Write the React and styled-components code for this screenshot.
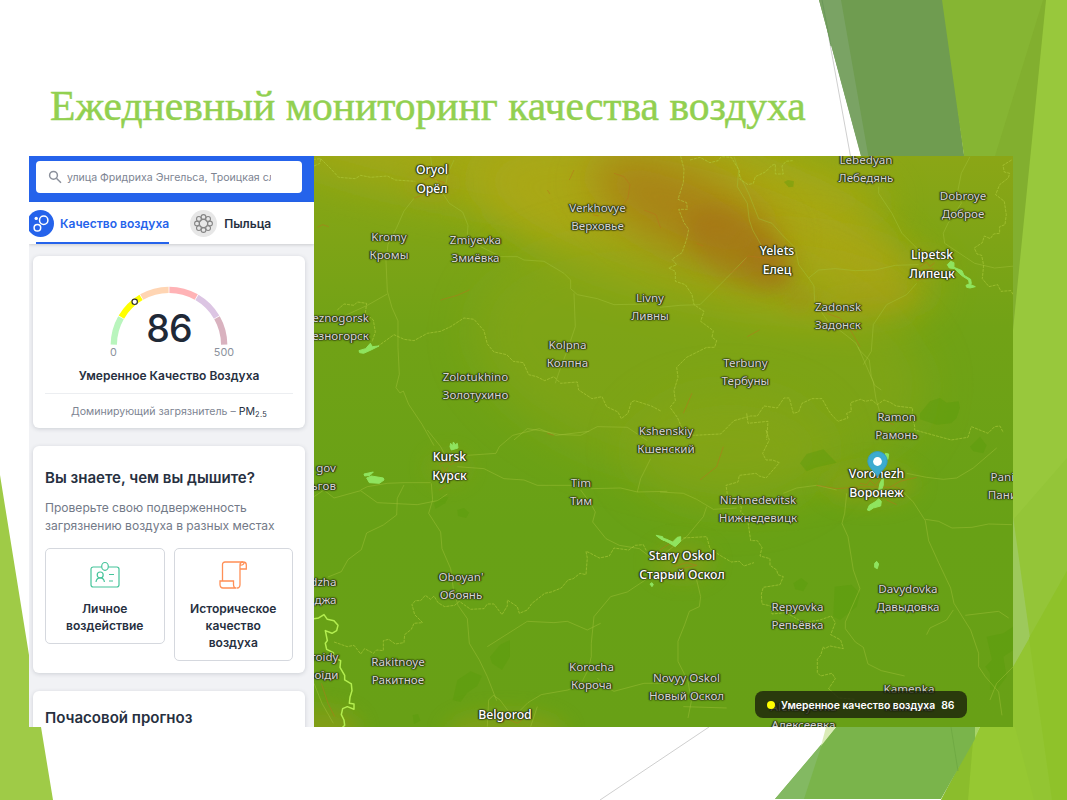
import React from "react";
import styled, { createGlobalStyle, css } from "styled-components";

const GlobalStyle = createGlobalStyle`
  *, *::before, *::after { box-sizing: border-box; }
  body { margin: 0; background: #fff; overflow: hidden; }
`;

/* ---------- slide ---------- */

const Slide = styled.main`
  position: relative;
  width: 1067px;
  height: 800px;
  overflow: hidden;
  background: #fff;
`;

const Facets = styled.svg`
  position: absolute;
  inset: 0;
`;

const SlideBody = styled.div`
  position: relative;
  display: flex;
  flex-direction: column;
  padding: 81px 54px 0 29px;
`;

const Title = styled.h1`
  margin: 0;
  padding-left: 21px;
  height: 75px;
  font: 400 41.55px/51px "Liberation Serif", serif;
  color: #92d050;
  -webkit-text-stroke: 0.5px #92d050;
  white-space: nowrap;
`;

const Screen = styled.section`
  display: flex;
  height: 571px;
  overflow: hidden;
  font-family: Inter, sans-serif;
`;

/* ---------- sidebar ---------- */

const Sidebar = styled.aside`
  display: flex;
  flex-direction: column;
  width: 285px;
  height: 571px;
  overflow: hidden;
  background: #f1f2f5;
  color: #27303f;
`;

const SearchBar = styled.div`
  flex: none;
  height: 46px;
  padding: 5px 12px 9px 7px;
  background: #2563eb;
`;

const SearchField = styled.div`
  display: flex;
  align-items: center;
  height: 32px;
  padding: 0 31px 0 12px;
  gap: 5px;
  border-radius: 4px;
  background: #fff;
  color: #7d8492;
  font-size: 10.6px;
`;

const SearchText = styled.span`
  flex: 1;
  overflow: hidden;
  white-space: nowrap;
`;

const Tabs = styled.nav`
  position: relative;
  flex: none;
  display: flex;
  height: 42px;
  gap: 21px;
  padding-left: 7px;
  background: #fff;
  box-shadow: 0 1px 3px rgba(0, 0, 0, 0.16);
`;

const Tab = styled.div`
  display: flex;
  align-items: center;
  gap: ${(p) => (p.$active ? 6 : 7)}px;
  font-size: 12.05px;
  font-weight: 600;
  white-space: nowrap;
  color: ${(p) => (p.$active ? "#2563eb" : "#27303f")};
  ${(p) => p.$active && css`box-shadow: inset 0 -2px #2563eb;`}
  svg { flex: none; margin-left: ${(p) => (p.$active ? "-9px" : "0")}; }
`;

const CardList = styled.div`
  display: flex;
  flex-direction: column;
  gap: 18px;
  padding: 12px 9px 0 4px;
`;

const Card = styled.article`
  flex: none;
  height: ${(p) => p.$height}px;
  padding: ${(p) => p.$padTop}px 12px 0;
  border-radius: 6px;
  background: #fff;
  box-shadow: 0 1px 4px rgba(30, 40, 60, 0.17);
`;

const Gauge = styled.div`
  position: relative;
  display: flex;
  justify-content: center;
  height: 80px;
`;

const GaugeValue = styled.div`
  position: absolute;
  top: 23px;
  left: 0;
  right: 0;
  text-align: center;
  font-size: 37.5px;
  line-height: 46px;
  font-weight: 500;
  letter-spacing: -0.8px;
  color: #1f2937;
`;

const GaugeScale = styled.div`
  position: absolute;
  top: 63px;
  left: 65px;
  width: 124px;
  display: flex;
  justify-content: space-between;
  font-size: 10.8px;
  line-height: 14px;
  color: #8b919c;
`;

const Status = styled.div`
  height: 31px;
  padding-top: 5px;
  line-height: 16px;
  border-bottom: 1px solid #eceef1;
  text-align: center;
  font-size: 12px;
  font-weight: 600;
  white-space: nowrap;
`;

const Pollutant = styled.div`
  padding-top: 10px;
  text-align: center;
  font-size: 10.6px;
  line-height: 16px;
  white-space: nowrap;
  color: #7d8492;
  b { font-weight: 400; color: #27303f; }
  small { font-size: 7.4px; position: relative; top: 2px; letter-spacing: 0.3px; }
`;

const Heading = styled.h2`
  margin: 0;
  font-size: 15.05px;
  line-height: 20px;
  font-weight: 600;
  white-space: nowrap;
`;

const Lead = styled.p`
  margin: 11px 0 13px;
  font-size: 12.05px;
  line-height: 18px;
  color: #737a88;
  white-space: nowrap;
`;

const Options = styled.div`
  display: flex;
  align-items: flex-start;
  gap: 9px;
`;

const Option = styled.div`
  display: flex;
  flex-direction: column;
  align-items: center;
  width: 120px;
  height: ${(p) => p.$height}px;
  padding-top: 12px;
  border: 1px solid #d5d8de;
  border-radius: 5px;
  text-align: center;
  font-size: 12.05px;
  line-height: 16.9px;
  font-weight: 600;
  svg { height: 28px; margin-bottom: 12px; }
`;

/* ---------- map ---------- */

const MapPane = styled.div`
  position: relative;
  width: 699px;
  height: 571px;
  overflow: hidden;
`;

const MapCanvas = styled.svg`
  display: block;
`;

const Label = styled.div`
  position: absolute;
  left: ${(p) => p.$x - 314}px;
  top: ${(p) => p.$y - 156 - (p.$city ? 10 : 9)}px;
  transform: translateX(${(p) => (p.$end ? "-100%" : "-50%")});
  text-align: ${(p) => (p.$end ? "right" : "center")};
  white-space: nowrap;
  font-family: "Noto Sans", "Open Sans", sans-serif;
  font-size: ${(p) => (p.$city ? 12.25 : 11.6)}px;
  line-height: ${(p) => (p.$city ? 19.3 : 18.2)}px;
  font-weight: ${(p) => (p.$city ? 500 : 400)};
  color: ${(p) => (p.$city ? "#fff" : "#d6d6d2")};
  text-shadow: 0 0 1px #2c3518, 0 0 1px #2c3518, 0 0 2px #2c3518, 0 0 2px #2c3518,
    1px 0 1px #2c3518, -1px 0 1px #2c3518;
`;

const Pin = styled.svg`
  position: absolute;
  left: 552px;
  top: 294px;
`;

const Toast = styled.div`
  position: absolute;
  left: 441px;
  top: 535px;
  display: flex;
  align-items: center;
  width: 212px;
  height: 27px;
  padding: 1px 0 0 12px;
  border-radius: 8px;
  background: rgba(24, 30, 10, 0.78);
  color: #fff;
  font-size: 10.4px;
  font-weight: 600;
  white-space: nowrap;
`;

const Dot = styled.span`
  width: 8px;
  height: 8px;
  margin-right: 6px;
  border-radius: 50%;
  background: #ff0;
`;

const ToastValue = styled.span`
  margin-left: 6px;
`;

const LABELS = [
  [432, 169.5, "Oryol", "Орёл", 1],
  [389, 236.5, "Kromy", "Кромы"],
  [475.5, 240, "Zmiyevka", "Змиёвка"],
  [597.5, 207.5, "Verkhovye", "Верховье"],
  [650, 298, "Livny", "Ливны"],
  [567.5, 345, "Kolpna", "Колпна"],
  [475.5, 377, "Zolotukhino", "Золотухино"],
  [369, 318, "eznogorsk", "езногорск", 0, 1],
  [866, 160, "Lebedyan", "Лебедянь"],
  [963, 195.5, "Dobroye", "Доброе"],
  [777, 251, "Yelets", "Елец", 1],
  [932, 255, "Lipetsk", "Липецк", 1],
  [838, 306.5, "Zadonsk", "Задонск"],
  [745.5, 362.5, "Terbuny", "Тербуны"],
  [666, 431, "Kshenskiy", "Кшенский"],
  [896.5, 417, "Ramon", "Рамонь"],
  [449.5, 457, "Kursk", "Курск", 1],
  [336, 467.5, "gov", "ьгов", 0, 1],
  [581, 483, "Tim", "Тим"],
  [876.5, 473.5, "Voronezh", "Воронеж", 1],
  [1009.5, 477, "Panino", "Панино"],
  [758, 500, "Nizhnedevitsk", "Нижнедевицк"],
  [682, 556, "Stary Oskol", "Старый Оскол", 1],
  [461, 577, "Oboyan'", "Обоянь"],
  [336.5, 582, "dzha", "джа", 0, 1],
  [908, 589, "Davydovka", "Давыдовка"],
  [797.5, 606.5, "Repyovka", "Репьёвка"],
  [338.5, 656.5, "roidy", "роїди", 0, 1],
  [398, 662, "Rakitnoye", "Ракитное"],
  [591.5, 667, "Korocha", "Короча"],
  [686.5, 677.5, "Novyy Oskol", "Новый Оскол"],
  [909, 689, "Kamenka", "Каменка"],
  [505, 714.5, "Belgorod", "Белгород", 1],
  [803.5, 707, "Alekseyevka", "Алексеевка"],
];

/* [cx, cy, rx, ry, colour, opacity, rotation] */
const HEAT = [
  [560, 160, 330, 60, "#a8a914", 0.75, 8],
  [690, 225, 220, 72, "#aaa815", 0.95, 14],
  [820, 275, 115, 42, "#a9a614", 0.75, 8],
  [700, 360, 230, 120, "#8ba616", 0.5, 10],
  [730, 450, 100, 60, "#89a617", 0.5, 0],
  [685, 210, 100, 40, "#a97a16", 0.8, 25],
  [740, 250, 60, 32, "#a46517", 0.35, 34],
  [768, 264, 26, 18, "#a65c18", 0.3, 40],
  [800, 299, 16, 9, "#a67a17", 0.45, 0],
  [865, 300, 50, 12, "#a89a13", 0.35, -5],
  [925, 262, 24, 14, "#9aa015", 0.35, 0],
  [870, 484, 48, 20, "#90a015", 0.55, 0],
  [683, 562, 30, 18, "#8f9f14", 0.5, 0],
  [506, 732, 60, 20, "#8ea015", 0.6, 0],
  [320, 730, 40, 22, "#929c16", 0.6, 0],
  [448, 468, 22, 16, "#879f15", 0.4, 0],
  [432, 184, 26, 12, "#a89512", 0.4, 0],
];

/* Each map tile is drawn at three times the screen scale. */
const TILES = [
  {
    at: [314, 150],
    borders: [
      "M0 48l18-8 2-14-20 2M20 26l30 30 24 26 50 4 16-10 30 6 50 -4 24 12 60 4M190 590l50-36 30 14 30 4 40-22 40-6 30-14 40-26 30 4 30 34 10 40 20 24 38 8 20 20 30 4 16 36 24 6 24 12 28-12 20 20 50-4 4 24 40 26 30-6 14 30 34 16 10 20 20-16 10-34 10-4 50 16 30 16",
      "M70 480l20-18 30 4 10-10 28 4-4 30 24 20 6 36-10 30",
    ],
    roads: [
      "M300 145l-30 38-22 50-26 50-6 50 4 90 14 50 18 40 0 80 4 80-10 40 12 16 10-6 16 40 40 60 36 64",
      "M350 20l6 50 30 60 20 30 40 26 16 40-2 30",
      "M500 290l60 30 50 0 20 10 60 4 60 36 20 20 0 26 20 18 60 12 50 18 100-2",
      "M60 512l100-46 60-34M600 870l40-34 40 6 60 12 60 2 50-26 90 2 60 40",
      "M420 30l-18 40 -6 30M780 430l4 100-20 60-30 80-10 30",
    ],
    hot: ["M900 70l30 10 18 24-6 40-14 20M990 180l36 14 14 40M780 60l-14 30M700 120l8 12M330 90l20-8 22 10 20 6-30 16M10 232l16-8 18 6M380 450l50-14 36-16M836 194l20 4M300 145l40-16"],
    lakes: ["M135 602l20-6 14-16 6 10 20-2-24 12-22 10-12-2z"],
    woods: [],
  },
  {
    at: [660, 150],
    borders: [
      "M62 18l10 40-2 40-16 50 26 10 2 20-26 0 16 40 14 20-6 30-14 40-30 20 14 16-24 10 20 10 0 30 30 10 20 30 6 30 30 20-10 30 38 28-4 20 14 10-6 20-24 0-60 30-30 30 4 30-12 40 4 30-16 20 22 30 20 46 30 8 80-4 40-40 50-14 20 0 20-30 40 6 20-30 16 0 12 46 16-4 10-26 30-14 30 0 20 36 10 14 18 18 30-10-4-14 14-6-2-26 30-10 14 6 20-4 16 14 20-14 20 8 16 10 50 6-2 24 8 30 0 12 110 30 50-8 10-32 50 20 20-20 16-2 10 20",
      "M90 30l30-8 30 16 24-6 10-12 30 2 24 40 2 26 24 16 16-4 6-20 30-14 20-20 10-4 0 30 24 0-4-24 12-14 20-2",
      "M1055 30l-26 16 4 20 16 4-4 14-26 20-12 30 26 20 6 40-4 30-16 6 0 20-18 2-10 14-18-8-6 20-24 16 8 18 14 4 6 30-4 40 20 24 26-6 10 20 30-2 16 30",
      "M260 790l4 30 60-6-4 56",
    ],
    roads: [
      "M222 20l14 40-4 50 30 50 6 50 10 30 26 46M236 70l30 60 30 76 40 14 30 34 40 40 10 50 30 40 16 24 2 50 40 56 60 46 24 20 10 20 30 30 6 50 10 26 20 14",
      "M0 472l60-6 60-2 40-40 40-40 60-62M446 384l30-24 50-4 60 6 60-2 60-14 70-2",
      "M656 110l0 20 40 60 30 60 50 50M930 20l-26 50-10 50 10 40-40 60-14 30 4 30 30 20 60 40 60 14 60-6",
      "M740 434l-60 30-40 60-6 80-24 40M770 400l-30 34M594 590l20 46 26 60 8 50 14 50",
    ],
    hot: ["M210 370l30-20 24-32 66 8M110 280l20 8M262 560l36-20M780 350l20-14 10 14 14-12M790 360l30-4M770 390l30-4 M500 490l40 14 30 30 20 10M560 520l40 70M70 790l26-60M690 820l12 4"],
    lakes: ["M862 344l10-10 10 4 0 14 24 10 6 14 20 12 2 12-2 4 14 6-16 4-10-2-2-6 10-4-2-12-22-14-20-20-16-2z"],
    woods: ["M372 96l12-6 18 4-2 16-14 2z", "M780 790l30-36 30-10 20 14 36-4 4 20-10 30-16 16-44 4-50-16z"],
  },
  {
    at: [314, 430],
    borders: [
      "M60 636l40 14 20-4 20 26 12-16 26 14 10-10 20 2 0-30 16-4 20 14 26-4 2-24 20-16 8-18 26-2-24-24-8-30 10-12 16 0 14-16 16 12 10-10 12 20 20 12 30-4 14-12 14 10 20 14 40-2 10-14 20 0 24 32 16-26 0-18 30 20 6 20 24-10 14-20 26-20 12-10 20-4 30-12 20-24 16-4 20-16 18 4 4-50-4-20 10 4 30 16 30-6 14-24 44 6 20-14 24-2 10 20",
    ],
    roads: [
      "M340 0l40 50 16 30M460 76l86-6 10-20 40-34 80-20 50 20 100-12M430 110l80 6 60 30 60 4 40 16 130 0M830 176l90-2 50 12 90-2M970 186l10-40 30-60",
      "M0 200l30-20 30 24 80-22 50 36 120 6 60-12 30-20M140 180l20-10 60-10 50-2 80 0M270 165l-20 40-2 50-40 30-50 24-16 50-40 30-20 36-40 16",
      "M352 160l4 50-12 40 36 56 4 50 26 60 8 60 14 50 28 40 6 74 30 50 24 50 18 46 10 26",
      "M800 180l30 40 14 26-8 30 40 50 40 20 60 10 40 30M1000 446l-60 40-50 14-50 60-8 80 0 40-10 40-20 40-40 20-80 14-40 24-30 30M1050 760l-60 0-90 24-20-10-30-30M520 650l120-76 80 4 40-4 60 26 40-20",
      "M520 890l4-80 14-14 20 14 30 40M650 890l20-60M0 760l24 60 34 60",
    ],
    hot: ["M376 104l20-10 14 10 20-10 10 4M384 110l8 18 10-16M376 180l20-14M560 880l20-14 30 14 14-10M700 10l20 6M430 460l12 6M22 760l20 60 20 40"],
    lakes: ["M410 40l6 8 2-12 6 8 6-4 2 14-20 6-4-10zM150 132l28-6-10 10-16 2zM158 144l14-6 36 6 2 6-14 10-30-2zM1026 316l20 4 4 12-14-8zM1008 462l6-4 4 6-4 6z"],
    woods: ["M430 240l20-6 16 14-10 16-24-6zM360 220l20-20 24 0-10 20-30 16zM528 680l30-36 30-14 0 50-24 40-30-20zM416 810l14-60 40-26 34 14-14 30-30 20-20 28zM296 856l16-4 8 20-20 10z"],
    outline: "M0 566l14-2 16-10 10 14 20 4 12 14-4 16-14 8-20-8 6 30-6 8 4 18 20 10 4 16 18 8-2 20 14 24 0 14 20 12 2 20-6 20-2 18 14 2 0 16-20-8-14 6-4 18 8 16 2 16-10 10",
  },
  {
    at: [660, 430],
    borders: [
      "M318 0l10 30-20 40 10 20 20 0 20 8-40 46-20-6-10-8-50 6-4 20-36 10 6 40 30 6 10 20-2 14 20 16 10 70 20 0 14 20-6 26 30 8 0 20 20 14 4 14 16 6-10 24-50 8-6 20 2 30 26 6 4 24 40-4 20 10 34 20 50-8 34-12 12 20-14 36 30 16 8 26-40-8-16 8-4-6-8 26-10 12 0 40 10 10 34-8 10 16-20 30 30 28 50 4",
      "M70 324l70-4 10 36 30 20 34 20 24-2 14 14 30-10",
    ],
    roads: [
      "M0 186l70 4 40 18 50 30 70-4M140 230l-10 30-50 60-40 30-40 30M110 450l12 50-4 30-30 14-14 40-20 50 0 60 30 60 10 60-10 50M70 830l130 4",
      "M370 190l40-16 60-8 60 14M720 176l40 40 36 56 10 60 30 66 36 76 10 46 50 80 24 70 0 40 20 30 40 46 10 70M560 190l-6 60-8 30 18 40 16 100 20 56-44 100 0 20 30 40 24 16 14 50 40 20 70 16",
      "M740 130l60 12 50 6 40-4 50-30 70-60M796 268l40 6 40 20 60-2 50-10 70 2M880 540l-20 30-50 24-10 20M916 556l100-12 30 20M1060 710l-50 50-20 50",
    ],
    hot: ["M470 166l60 10 80-6 80 2 30-18 50-12M600 160l20 4 10-14 16 16 14-16M640 180l14 20 14-4M660 190l20 20 30 14M120 150l50-40 20-60M0 360l60-40M40 410l40-12 30 8-44 10M700 170l20 6"],
    lakes: ["M676 70l10 2-2 16-6-4zM656 180l4-20 10-20 0 26-8 20zM622 240l6-14 20-12 8-8 8 8-2 14-22 6-12 8zM0 322l20 6 18 8 14-14 10-2 0 14-16 16-10-6-10-6-24-12zM644 400l6-6 6 8-4 14-8-4z"],
    woods: ["M420 100l20-28 50-14 40 40-60 14-30 12zM520 560l4-90 50-6 26 26-10 40-50 40zM400 460l24-16 20 16-14 24-24-6zM980 620l50-10 30-20 0 70-30 20 10 60-30 40-20 0 0-50-14-20 20-20z", "M930 50l30-30 20 26-10 24-30-6z"],
  },
];

const ZONES = ["#b9f5bd", "#ffff00", "#ffd5b3", "#ffb3b6", "#dcc5e3", "#d9b2bf"];

function arc(from, to) {
  const pt = (deg) => {
    const a = (Math.PI * (180 - deg)) / 180;
    return `${(60 + 55.2 * Math.cos(a)).toFixed(2)} ${(59 - 55.2 * Math.sin(a)).toFixed(2)}`;
  };
  return `M${pt(from)}A55.2 55.2 0 0 1 ${pt(to)}`;
}

function SlideFacets() {
  return (
    <Facets width="1067" height="800" viewBox="0 0 1067 800" aria-hidden="true">
      <path d="M822 0l31 170M709 727L600 800" stroke="#cfcfcf" fill="none" />
      <path fill="#6f9c50" d="M819 0H944L966 170H865z" />
      <path fill="#7aa364" d="M819 0H841L869 160H862z" />
      <path stroke="#6b985a" d="M822 0l9 46" />
      <path fill="#86b533" d="M942 0H1067V500H1010L964 156z" />
      <path fill="#82af2f" d="M1043 0h6L1013 400V156H995z" />
      <path fill="#98c83c" d="M1046 0H1067V800H1013V330z" />
      <path fill="#94c538" d="M1067 458L1013 520V800H1067z" />
      <path fill="#9dc95c" d="M1013 516L1030 638 1013 668z" />
      <path fill="#93c532" d="M1067 571L1013 667V727H980L941 800H1067z" />
      <path fill="#8fc22a" d="M1067 571L1029 638 1052 800H1067z" />
      <path fill="#96c832" d="M980 727h35L1034 800H968l5-60z" />
      <path fill="#8bbd2c" d="M973 740L968 800H941z" />
      <path fill="#7ab44b" d="M836 727H975V739L941 799H775z" />
      <path fill="#83b962" d="M822 744L804 799H775z" />
      <path fill="#dbecb8" d="M826 727h10l-15 19z" />
      <path fill="#a8d468" d="M975 727h5l-5 11z" />
      <path stroke="#70aa44" d="M951 727l7 44" />
      <path fill="#9fcb47" d="M0 475L29 655V727H41L53 800H0z" />
    </Facets>
  );
}

function RegionMap() {
  return (
    <MapCanvas width="699" height="571" viewBox="314 156 699 571" aria-hidden="true">
      <defs>
        <linearGradient id="base" x1="0" y1="0" x2="0" y2="1">
          <stop offset="0" stopColor="#8ba616" />
          <stop offset="0.3" stopColor="#71a216" />
          <stop offset="0.65" stopColor="#68a116" />
          <stop offset="1" stopColor="#68a016" />
        </linearGradient>
        <filter id="soft" x="-60%" y="-100%" width="220%" height="300%">
          <feGaussianBlur stdDeviation="22" />
        </filter>
        <filter id="softer" x="-60%" y="-100%" width="220%" height="300%">
          <feGaussianBlur stdDeviation="10" />
        </filter>
      </defs>
      <rect x="314" y="156" width="699" height="571" fill="url(#base)" />
      {HEAT.map(([x, y, rx, ry, fill, opacity, turn], i) => (
        <ellipse
          key={i}
          cx={x}
          cy={y}
          rx={rx}
          ry={ry}
          fill={fill}
          opacity={opacity}
          filter={rx > 90 ? "url(#soft)" : "url(#softer)"}
          transform={`rotate(${turn} ${x} ${y})`}
        />
      ))}
      {TILES.map((t, i) => (
        <g key={i} transform={`translate(${t.at}) scale(.3333)`} fill="none" strokeLinejoin="round">
          {t.woods.map((d) => <path key={d} d={d} fill="#579a08" opacity=".35" />)}
          {t.roads.map((d) => <path key={d} d={d} stroke="#a4c23c" strokeWidth="2.6" opacity=".5" />)}
          {t.borders.map((d) => (
            <path key={d} d={d} stroke="#b4cf40" strokeWidth="3" strokeDasharray="9 3" opacity=".55" />
          ))}
          {t.hot.map((d) => <path key={d} d={d} stroke="#b9731c" strokeWidth="3" opacity=".5" />)}
          {t.lakes.map((d) => <path key={d} d={d} fill="#8fe45e" stroke="#8fe45e" strokeWidth="3" />)}
          {t.outline && <path d={t.outline} stroke="#b4ee50" strokeWidth="4.5" />}
        </g>
      ))}
    </MapCanvas>
  );
}

function BubblesIcon() {
  return (
    <svg width="27" height="27" viewBox="0 0 27 27" fill="none" stroke="#fff" strokeWidth="1.5">
      <circle cx="13.5" cy="13.5" r="13.5" fill="#2563eb" stroke="none" />
      <circle cx="16.7" cy="10.3" r="4.2" />
      <circle cx="10.4" cy="17.8" r="3.3" />
      <circle cx="9.2" cy="8.4" r="1.7" fill="#fff" stroke="none" />
    </svg>
  );
}

function PollenIcon() {
  return (
    <svg width="27" height="27" viewBox="0 0 27 27" fill="none" stroke="#858585" strokeWidth="1.1">
      <circle cx="13.5" cy="13.5" r="13.5" fill="#e7e7e7" stroke="none" />
      <circle cx="13.5" cy="13.5" r="4.1" />
      {Array.from({ length: 8 }, (_, i) => {
        const a = (i * Math.PI) / 4;
        return <circle key={i} cx={13.5 + 6.5 * Math.cos(a)} cy={13.5 + 6.5 * Math.sin(a)} r="2.4" />;
      })}
    </svg>
  );
}

function BadgeIcon() {
  return (
    <svg width="30" height="28" viewBox="0 0 30 28" fill="none" stroke="#45c49a" strokeWidth="1.2">
      <path d="M11.5 6H3.2C1.8 6 1 6.8 1 8.2v15.6c0 1.4.8 2.2 2.2 2.2h23.6c1.4 0 2.2-.8 2.2-2.2V8.2C29 6.8 28.2 6 26.8 6h-8.3" />
      <ellipse cx="15" cy="5.4" rx="3.3" ry="3.9" />
      <circle cx="10.2" cy="14" r="3" />
      <path d="M6 21c.3-3.2 2-4.2 4.2-4.2s3.9 1 4.2 4.2M19 13.5h5M19 20h4" />
    </svg>
  );
}

function ScrollIcon() {
  return (
    <svg width="28" height="28" viewBox="0 0 28 28" fill="none" stroke="#ff8f56" strokeWidth="1.3">
      <path d="M3.5 20V3.500C3.500 2 4.500 1 6 1h18c2.200 0 3.300 1 3.300 2.800V8H21" />
      <path d="M24 1c-2 0-3 1.200-3 3v19.500c0 2-1.200 3.500-3 3.500M25 1.300c.3 1.800-1.500 3-4 2.700" />
      <path d="M1 20h13.500v3.500c0 2 1 3.500 3 3.500H4c-2 0-3-1.500-3-3.500z" />
    </svg>
  );
}

function SearchIcon() {
  return (
    <svg width="14" height="14" viewBox="0 0 14 14" fill="none" stroke="#8b909b" strokeWidth="1.5">
      <circle cx="5.5" cy="5.3" r="3.9" />
      <path d="M8.4 8.2l4.6 4.5" />
    </svg>
  );
}

export default function App() {
  return (
    <Slide>
      <GlobalStyle />
      <SlideFacets />
      <SlideBody>
        <Title>Ежедневный мониторинг качества воздуха</Title>
        <Screen>
          <Sidebar>
            <SearchBar>
              <SearchField>
                <SearchIcon />
                <SearchText>улица Фридриха Энгельса, Троицкая слобода</SearchText>
              </SearchField>
            </SearchBar>
            <Tabs>
              <Tab $active>
                <BubblesIcon />
                Качество воздуха
              </Tab>
              <Tab>
                <PollenIcon />
                Пыльца
              </Tab>
            </Tabs>
            <CardList>
              <Card $height={172} $padTop={27}>
                <Gauge>
                  <svg width="120" height="64" viewBox="0 -3 120 64" fill="none">
                    {ZONES.map((color, i) => (
                      <path key={color} d={arc(i * 30 + 0.4, i * 30 + 29.6)} stroke={color} strokeWidth="6.3" />
                    ))}
                    <circle cx="25.7" cy="15.8" r="2.7" fill="#fff" stroke="#333" strokeWidth="1.2" />
                  </svg>
                  <GaugeValue>86</GaugeValue>
                  <GaugeScale>
                    <span>0</span>
                    <span>500</span>
                  </GaugeScale>
                </Gauge>
                <Status>Умеренное Качество Воздуха</Status>
                <Pollutant>
                  Доминирующий загрязнитель – <b>PM<small>2.5</small></b>
                </Pollutant>
              </Card>
              <Card $height={227} $padTop={22}>
                <Heading>Вы знаете, чем вы дышите?</Heading>
                <Lead>
                  Проверьте свою подверженность
                  <br />
                  загрязнению воздуха в разных местах
                </Lead>
                <Options>
                  <Option $height={96}>
                    <BadgeIcon />
                    <span>Личное<br />воздействие</span>
                  </Option>
                  <Option $height={113}>
                    <ScrollIcon />
                    <span>Историческое<br />качество<br />воздуха</span>
                  </Option>
                </Options>
              </Card>
              <Card $height={120} $padTop={17}>
                <Heading>Почасовой прогноз</Heading>
              </Card>
            </CardList>
          </Sidebar>
          <MapPane>
            <RegionMap />
            {LABELS.map(([x, y, latin, cyrillic, city, end]) => (
              <Label key={latin} $x={x} $y={y} $city={city} $end={end}>
                {latin}
                <br />
                {cyrillic}
              </Label>
            ))}
            <Pin width="23" height="29" viewBox="0 0 23 29">
              <path d="M11.500 27.500C10.500 22 1.800 18.500 1.800 11a9.700 9.500 0 0 1 19.400 0C21.200 18.500 12.500 22 11.500 27.500z" fill="#3cabd0" stroke="#379dbd" />
              <circle cx="11.500" cy="11.500" r="4.400" fill="#fff" />
            </Pin>
            <Toast>
              <Dot />
              Умеренное качество воздуха
              <ToastValue>86</ToastValue>
            </Toast>
          </MapPane>
        </Screen>
      </SlideBody>
    </Slide>
  );
}
